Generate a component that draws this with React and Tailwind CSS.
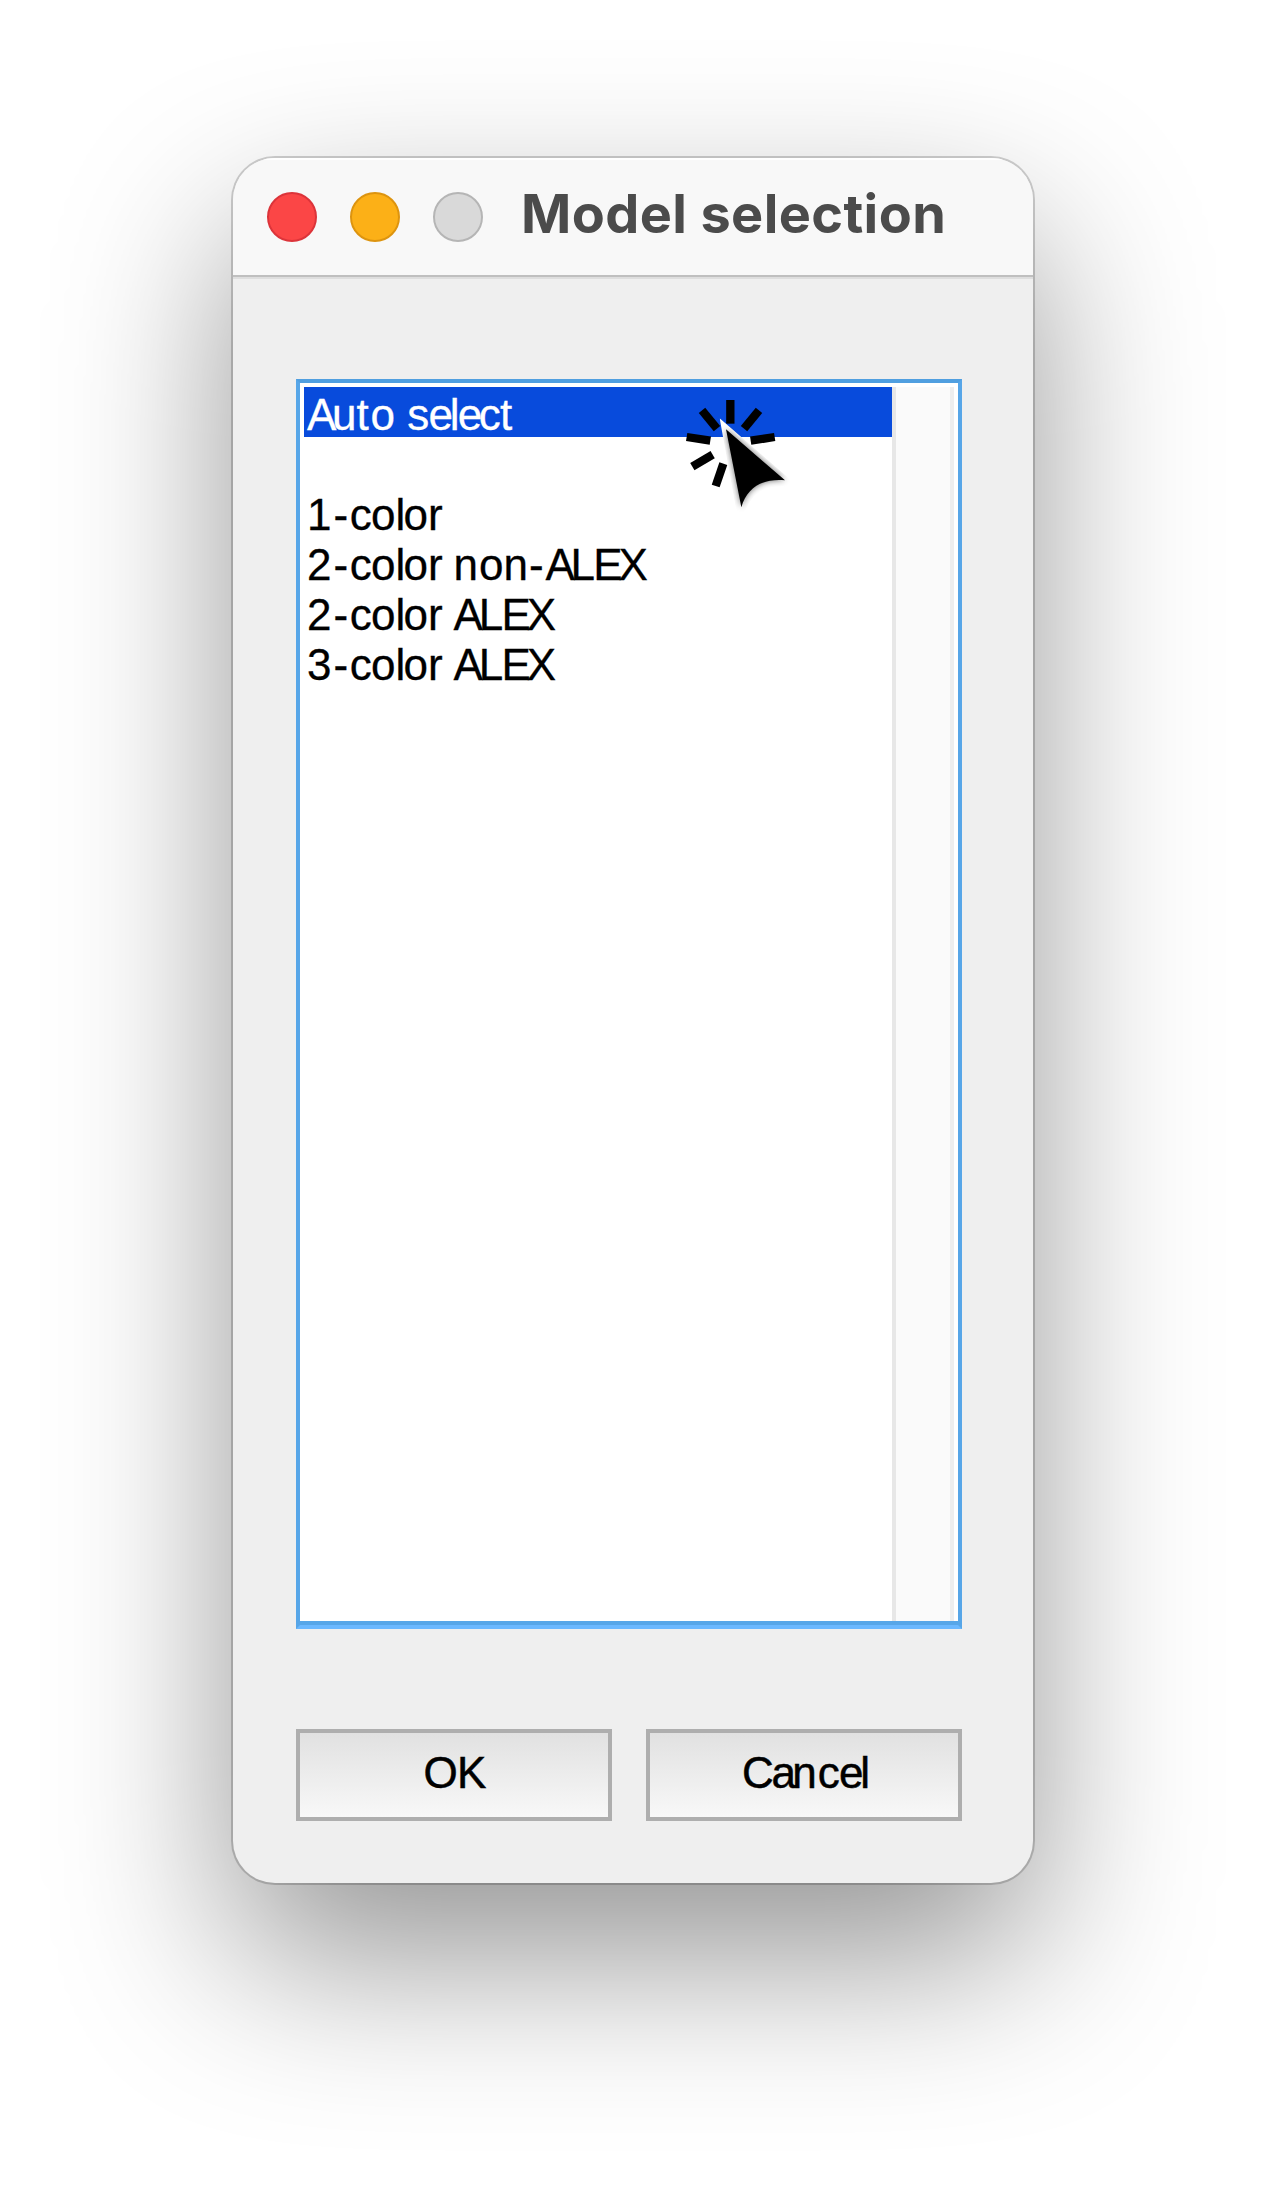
const MODELS = ["Auto select", "", "1-color", "2-color non-ALEX", "2-color ALEX", "3-color ALEX"];

// Per-glyph tracking (px) that gives the labels their uneven bitmap-like rhythm.
const TRACKING = {
  A: -4.3, C: -2.3, E: -4.2, L: -1.6, O: -0.7, a: -3.5, c: -0.9, e: -3.3, l: -1.8,
  n: 1, r: -1.2, t: 1.8, s: -0.8, "-": 1.7, 1: 2, 2: 2, 3: 2,
};

function Label({ text }) {
  return (
    <span className="whitespace-pre [font-kerning:none]">
      {[...text].map((ch, i) => (
        <span key={i} style={{ letterSpacing: `${TRACKING[ch] ?? 0}px` }}>{ch}</span>
      ))}
    </span>
  );
}

function ClickCursor() {
  return (
    <svg className="absolute left-[380px] top-[10px]" width="127" height="140" viewBox="60 69 381 420" aria-hidden="true">
      <defs>
        <clipPath id="halo">
          <path d="M179 145 L434 366 C330 330 262 350 240 484 Z" />
        </clipPath>
        <filter id="soft" x="-30%" y="-30%" width="160%" height="160%">
          <feGaussianBlur stdDeviation="10" />
        </filter>
      </defs>
      <g stroke="#000" strokeWidth="25">
        <path d="M211 90V161" />
        <path d="M126 121L171 176" />
        <path d="M297 121L252 176" />
        <path d="M80 201L151 212" />
        <path d="M344 201L272 212" />
        <path d="M97 290L158 254" />
        <path d="M167 348L190 281" />
      </g>
      <g clipPath="url(#halo)">
        <path d="M170 140H440V490H170Z" fill="#fff" />
        <path d="M198 178L375 331C310 325 262 350 244 412Z" fill="#000" opacity=".6" filter="url(#soft)" />
      </g>
      <path d="M198 178L375 331C310 325 262 350 244 412Z" />
    </svg>
  );
}

function DialogButton({ children }) {
  return (
    <button className="flex h-[92px] flex-1 justify-center border-4 border-[#aeaeae] bg-linear-to-b from-[#e1e1e1] to-[#f8f8f8] pt-[15px] pl-[2px] text-[44px] leading-[50px] text-black [-webkit-text-stroke:0.5px_black]">
      <Label text={children} />
    </button>
  );
}

export default function App() {
  return (
    <main className="flex h-[2192px] w-[1267px] flex-col overflow-hidden bg-white pl-[233px] pt-[158px] font-['Liberation_Sans',sans-serif]">
      <section className="flex h-[1725px] w-[800px] flex-col overflow-hidden rounded-[42px] bg-[#efefef] shadow-[0_0_0_2px_rgba(0,0,0,0.18),0_75px_174px_rgba(0,0,0,0.42)]">
        <header className="flex h-[121px] shrink-0 items-start border-b-2 border-[#dedede] bg-[#f8f8f8]">
          <div className="flex h-[119px] w-full items-start gap-[33px] border-b-2 border-[#bfbfbf] pl-[34px] pt-[34px] shadow-[inset_0_2px_1px_#fff]">
            <span className="size-[50px] shrink-0 rounded-full border-2 border-[#dc343a] bg-[#fb4646]" />
            <span className="size-[50px] shrink-0 rounded-full border-2 border-[#dd940f] bg-[#fcb017]" />
            <span className="size-[50px] shrink-0 rounded-full border-2 border-[#b5b5b5] bg-[#d9d9d9]" />
            <h1 className="ml-[5px] mt-[-10px] whitespace-nowrap font-['Inter',sans-serif] text-[54px] font-bold leading-[64px] tracking-[0.4px] text-[#4b4b4b]">
              Model selection
            </h1>
          </div>
        </header>
        <div className="flex flex-1 flex-col pl-[63px] pr-[71px] pt-[100px]">
          <div className="relative flex h-[1250px] border-4 border-[#57a6e8] border-t-[#509fe0] border-b-[#6bb8ff] bg-white shadow-[inset_0_-4px_0_#57a6e8] p-1">
            <ul className="w-[588px] text-[44px] leading-[55px] text-black [-webkit-text-stroke:0.3px_currentColor]">
              {MODELS.map((m, i) => (
                <li key={i} className={i === 0 ? "h-[50px] bg-[#084bdc] pl-[3px] text-white" : "h-[50px] pl-[3px]"}>
                  <Label text={m} />
                </li>
              ))}
            </ul>
            <div className="flex-1 border-x-4 border-l-[#e7e7e7] border-r-[#eeeeee] bg-[#fafafa]" />
            <ClickCursor />
          </div>
          <div className="mt-[100px] flex gap-[34px]">
            <DialogButton>OK</DialogButton>
            <DialogButton>Cancel</DialogButton>
          </div>
        </div>
      </section>
    </main>
  );
}
